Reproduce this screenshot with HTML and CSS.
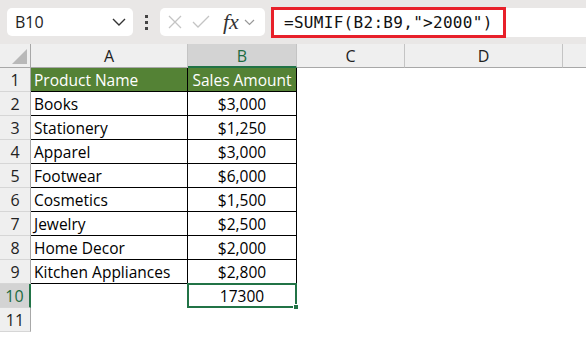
FILE: index.html
```html
<!DOCTYPE html>
<html>
<head>
    <title>SUMIF</title>
    <link rel="stylesheet" href="styles.css">
</head>
<body>
    <div class="toolbar">
        <div class="name-box">
            <span>B10</span>
            <svg class="chev" width="14" height="8" viewBox="0 0 14 8"><path d="M1 1 L7 7 L13 1" fill="none" stroke="#333" stroke-width="1.4"/></svg>
        </div>
        <div class="dots"><i></i><i></i><i></i></div>
        <div class="fx-box">
            <svg width="14" height="14" viewBox="0 0 14 14"><path d="M1 1 L13 13 M13 1 L1 13" fill="none" stroke="#c4c4c4" stroke-width="1.3"/></svg>
            <svg width="18" height="14" viewBox="0 0 18 14"><path d="M1 7 L6 12 L17 1" fill="none" stroke="#c4c4c4" stroke-width="1.3"/></svg>
            <span class="fx">fx</span>
            <svg width="11" height="7" viewBox="0 0 11 7"><path d="M1 1 L5.5 5.5 L10 1" fill="none" stroke="#999" stroke-width="1.2"/></svg>
        </div>
        <div class="formula"><span class="formula-text">=SUMIF(B2:B9,"&gt;2000")</span></div>
        <div class="formula-rest"></div>
    </div>

    <div class="sheet">
        <div class="corner"><div class="tri"></div></div>
        <div class="col-head">A</div>
        <div class="col-head sel">B</div>
        <div class="col-head">C</div>
        <div class="col-head">D</div>
        <div class="col-head last"></div>

        <div class="row-head">1</div>
        <div class="cell th first-row">Product Name</div>
        <div class="cell th num first-row">Sales Amount</div>
        <div class="blank"></div><div class="blank"></div><div class="blank"></div>

        <div class="row-head">2</div>
        <div class="cell">Books</div>
        <div class="cell num">$3,000</div>
        <div class="blank"></div><div class="blank"></div><div class="blank"></div>

        <div class="row-head">3</div>
        <div class="cell">Stationery</div>
        <div class="cell num">$1,250</div>
        <div class="blank"></div><div class="blank"></div><div class="blank"></div>

        <div class="row-head">4</div>
        <div class="cell">Apparel</div>
        <div class="cell num">$3,000</div>
        <div class="blank"></div><div class="blank"></div><div class="blank"></div>

        <div class="row-head">5</div>
        <div class="cell">Footwear</div>
        <div class="cell num">$6,000</div>
        <div class="blank"></div><div class="blank"></div><div class="blank"></div>

        <div class="row-head">6</div>
        <div class="cell">Cosmetics</div>
        <div class="cell num">$1,500</div>
        <div class="blank"></div><div class="blank"></div><div class="blank"></div>

        <div class="row-head">7</div>
        <div class="cell">Jewelry</div>
        <div class="cell num">$2,500</div>
        <div class="blank"></div><div class="blank"></div><div class="blank"></div>

        <div class="row-head">8</div>
        <div class="cell">Home Decor</div>
        <div class="cell num">$2,000</div>
        <div class="blank"></div><div class="blank"></div><div class="blank"></div>

        <div class="row-head">9</div>
        <div class="cell">Kitchen Appliances</div>
        <div class="cell num">$2,800</div>
        <div class="blank"></div><div class="blank"></div><div class="blank"></div>

        <div class="row-head sel">10</div>
        <div class="blank"></div>
        <div class="active">17300<span class="handle"></span></div>
        <div class="blank"></div><div class="blank"></div><div class="blank"></div>

        <div class="row-head">11</div>
        <div class="blank"></div><div class="blank"></div>
        <div class="blank"></div><div class="blank"></div><div class="blank"></div>
    </div>
</body>
</html>
```

FILE: styles.css
```css
* {
    box-sizing: border-box;
}

body {
    margin: 0;
    background: #fff;
    font-family: "Open Sans", "Noto Sans", sans-serif;
    overflow: hidden;
}

/* barra de formula */
.toolbar {
    height: 44px;
    background: #e9e7e6;
    display: flex;
    align-items: center;
    padding-left: 7px;
}

.name-box {
    width: 126px;
    height: 28px;
    background: #fff;
    border-radius: 5px;
    display: flex;
    align-items: center;
    justify-content: space-between;
    padding: 0 7px 0 8px;
    font-size: 16px;
    color: #222;
}

.dots {
    width: 27px;
    display: flex;
    flex-direction: column;
    align-items: center;
    gap: 3px;
}

.dots i {
    width: 3px;
    height: 3px;
    background: #444;
}

.fx-box {
    width: 105px;
    height: 28px;
    background: #fff;
    border-radius: 5px;
    display: flex;
    align-items: center;
    padding: 0 4px 0 8px;
    gap: 10px;
}

.fx-box .fx {
    font-family: "Liberation Serif", serif;
    font-style: italic;
    font-size: 22px;
    color: #333;
    line-height: 1;
    margin-left: 3px;
    margin-right: -5px;
}

.formula {
    margin-left: 6px;
    width: 235px;
    height: 31px;
    border: 3px solid #e8202a;
    background: #fff;
    display: flex;
    align-items: center;
    padding-left: 10px;
}

.formula-text {
    font-family: "DejaVu Sans Mono", monospace;
    font-size: 16px;
    color: #111;
    letter-spacing: 0.3px;
}

.formula-rest {
    flex: 1;
    height: 29px;
    background: #fff;
}

/* grade da planilha */
.sheet {
    display: grid;
    grid-template-columns: 31px 157px 109px 108px 158px 1fr;
    grid-template-rows: 24px repeat(11, 24px);
    font-size: 15.5px;
}

.corner {
    background: #efefef;
    border-right: 1px solid #a8a8a8;
    border-bottom: 1px solid #a8a8a8;
    position: relative;
}

.tri {
    position: absolute;
    right: 3px;
    bottom: 3px;
    width: 0;
    height: 0;
    border-left: 15px solid transparent;
    border-bottom: 15px solid #b8b8b8;
}

.col-head {
    background: #efefef;
    border-right: 1px solid #c4c4c4;
    border-bottom: 1px solid #a8a8a8;
    display: flex;
    align-items: center;
    justify-content: center;
    color: #222;
    font-size: 16px;
    padding-top: 1px;
}

.col-head.sel {
    background: #d3d3d3;
    color: #1e6b41;
    border-bottom: 2px solid #217346;
    padding-top: 2px;
}

.col-head.last {
    border-right: none;
}

.row-head {
    background: #efefef;
    border-right: 1px solid #a8a8a8;
    border-bottom: 1px solid #d6d6d6;
    display: flex;
    align-items: center;
    justify-content: center;
    color: #222;
    font-size: 16px;
}

.row-head.sel {
    background: #d3d3d3;
    color: #1e6b41;
    border-right: 2px solid #217346;
}

.cell {
    border-right: 1px solid #000;
    border-bottom: 1px solid #000;
    display: flex;
    align-items: center;
    padding-left: 3px;
    color: #000;
    white-space: nowrap;
}

.cell.num {
    justify-content: center;
    padding-left: 0;
}

.cell.th {
    background: #548235;
    color: #fff;
}

.blank {
    background: #fff;
}

.active {
    position: relative;
    border: 2px solid #217346;
    margin-left: -1px;
    margin-top: -1px;
    display: flex;
    align-items: center;
    justify-content: center;
    color: #000;
}

.handle {
    position: absolute;
    right: -4px;
    bottom: -4px;
    width: 6px;
    height: 6px;
    background: #217346;
    border: 1px solid #fff;
}
```
